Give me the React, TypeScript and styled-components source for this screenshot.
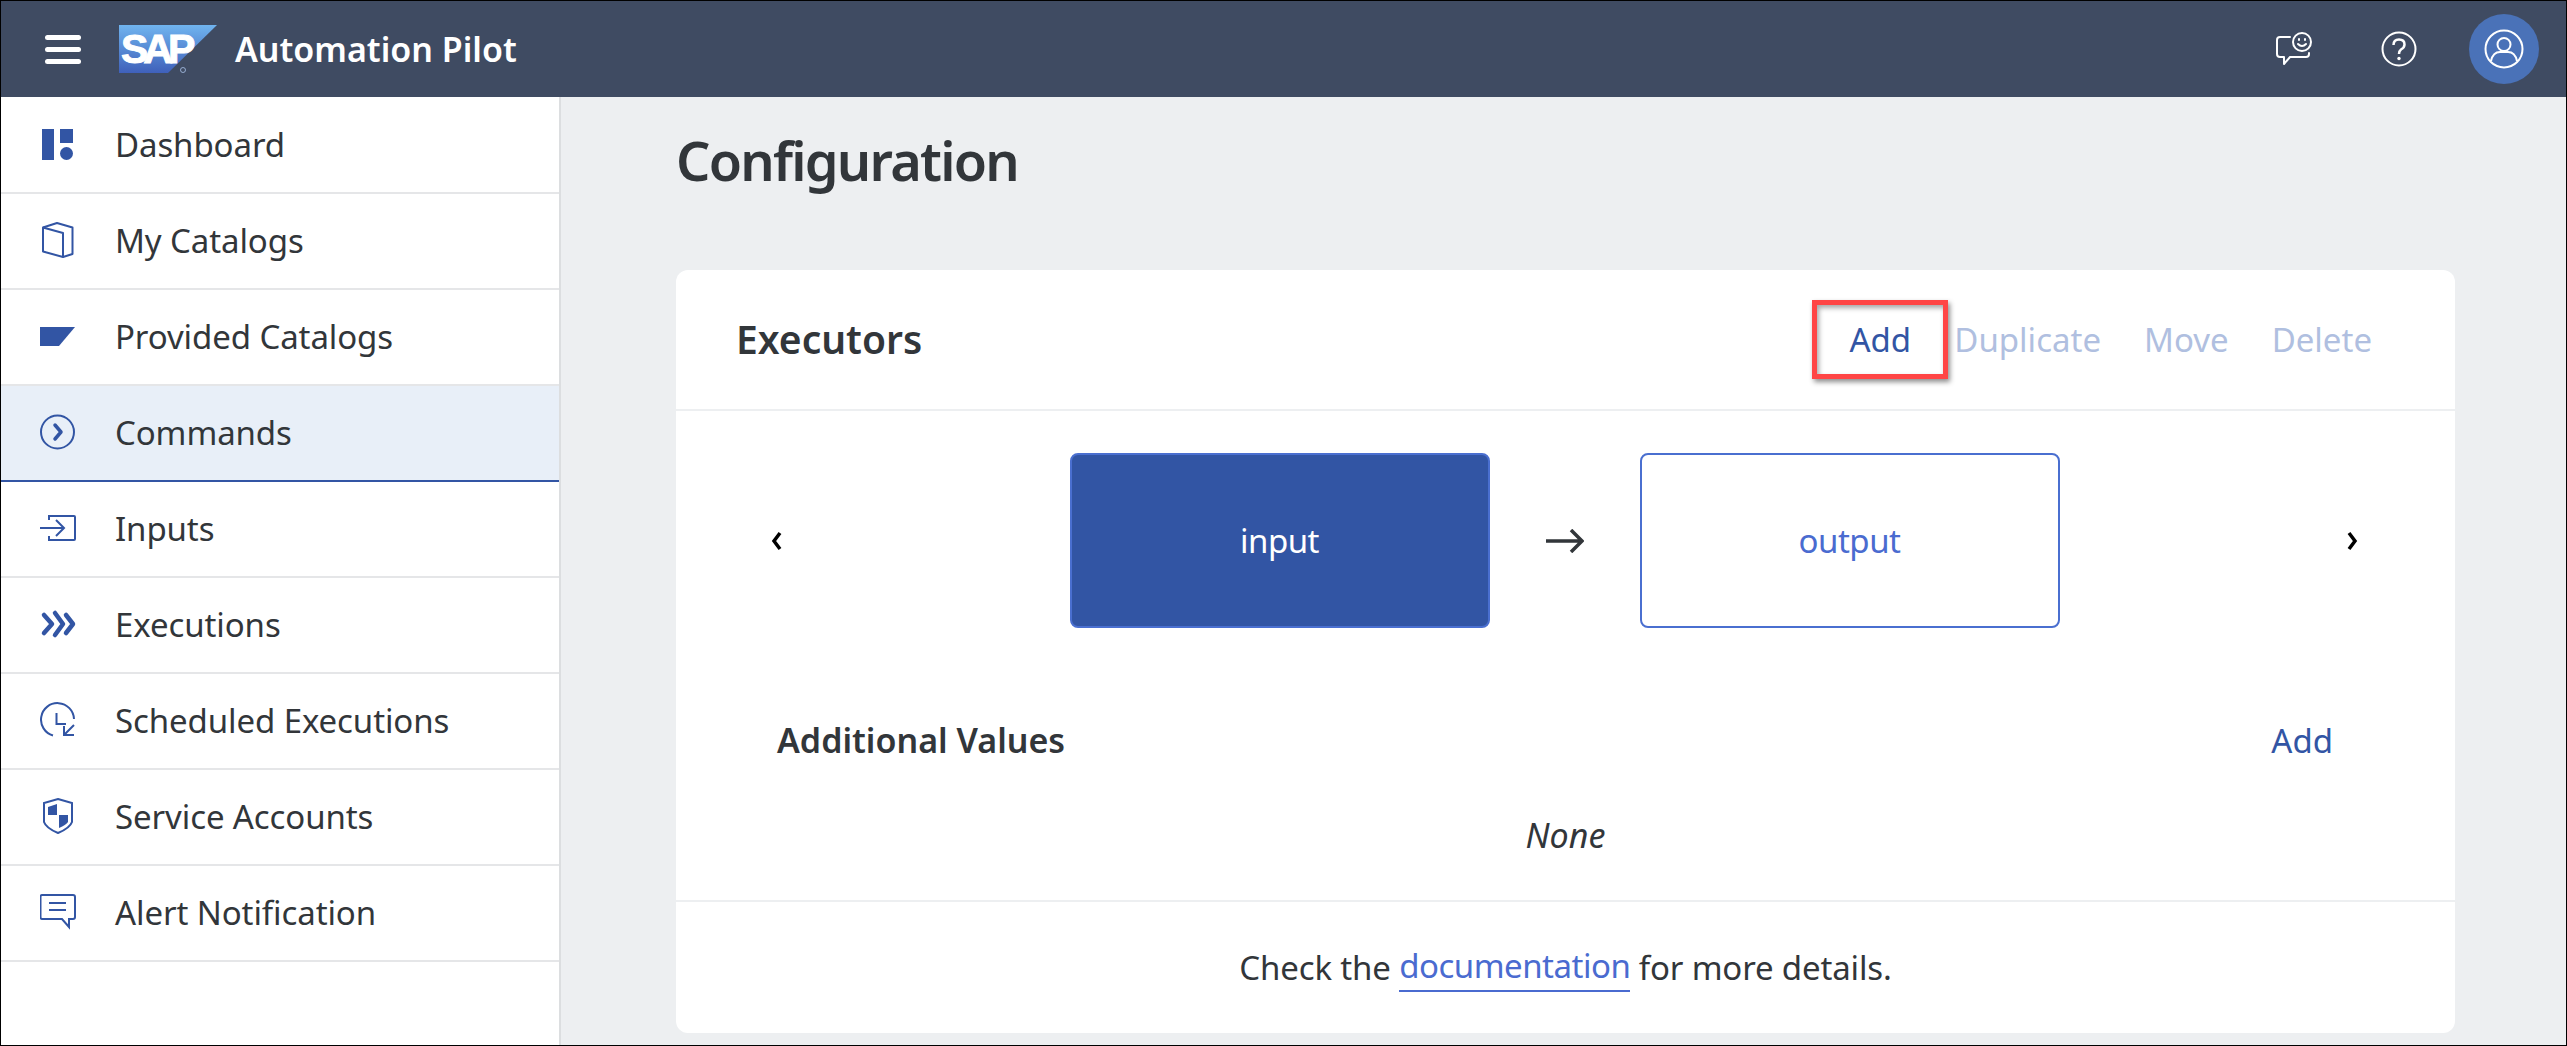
import React from "react";
import styled, { createGlobalStyle } from "styled-components";

const GlobalStyle = createGlobalStyle`
  html, body {
    margin: 0;
    height: 100%;
    overflow: hidden;
    background: #edeff1;
  }
  * {
    box-sizing: border-box;
  }
  #root {
    height: 100%;
  }
`;

const BLUE = "#3255a4";

// sidebar icons, all drawn on a 36x36 grid
const DashboardIcon = () => (
  <svg width="36" height="36" viewBox="0 0 36 36" fill={BLUE}>
    <rect x="2" y="3" width="12" height="31" />
    <rect x="20" y="3" width="13" height="14" />
    <circle cx="26.5" cy="27.5" r="6.5" />
  </svg>
);

const BookIcon = () => (
  <svg width="36" height="36" viewBox="0 0 36 36" fill="none" stroke={BLUE} strokeWidth="2" strokeLinejoin="round">
    <path d="M3 5.500 L23 11 V35 L3 29.500 Z" />
    <path d="M3 5.500 L17 1 L32.500 5.500 V32 L23 35" />
  </svg>
);

const TagIcon = () => (
  <svg width="36" height="36" viewBox="0 0 36 36" fill={BLUE}>
    <path d="M0 9 H35 L19 28 H0 Z" />
  </svg>
);

const CommandIcon = () => (
  <svg width="36" height="36" viewBox="0 0 36 36" fill="none" stroke={BLUE}>
    <circle cx="17.500" cy="18" r="16.500" strokeWidth="2" />
    <path d="M15 11 L21 18 L15 25" strokeWidth="3.500" strokeLinecap="round" strokeLinejoin="round" />
  </svg>
);

const InputIcon = () => (
  <svg width="36" height="36" viewBox="0 0 36 36" fill="none" stroke={BLUE} strokeWidth="2">
    <path d="M9 10 V6 H34 Q35 6 35 7 V29 Q35 30 34 30 H9 V26" />
    <path d="M0 18 H24 M16 10 L24 18 L16 26" />
  </svg>
);

const ExecutionIcon = () => (
  <svg width="36" height="36" viewBox="0 0 36 36" fill="none" stroke={BLUE} strokeWidth="4.500" strokeLinecap="round" strokeLinejoin="round">
    <path d="M4 9 L12 18 L4 27" />
    <path d="M15 7 L23 18 L15 29" />
    <path d="M26 9 L33 18 L26 27" />
  </svg>
);

const ScheduleIcon = () => (
  <svg width="36" height="36" viewBox="0 0 36 36" fill="none" stroke={BLUE} strokeWidth="2">
    <path d="M34 17 A16.500 16.500 0 1 0 13 33.500" />
    <path d="M16.500 11 V22 H26" />
    <path d="M34 23 L24 33 M24 24 V33 H34" />
  </svg>
);

const ShieldIcon = () => (
  <svg width="36" height="36" viewBox="0 0 36 36" fill="none" stroke={BLUE}>
    <path d="M18 1 L32 5 V24 Q30 30 18 35 Q6 30 4 24 V5 Z" strokeWidth="2" />
    <path d="M8 9 L17 6 V17 H8 Z M19 17 H28 V24 Q26 27 19 30 Z" fill={BLUE} stroke="none" />
  </svg>
);

const AlertIcon = () => (
  <svg width="36" height="36" viewBox="0 0 36 36" fill="none" stroke={BLUE} strokeWidth="2">
    <path d="M2 1 H33 Q35 1 35 3 V23 Q35 25 33 25 H29 V33 L22 25 H2 Q0.500 25 0.500 23 V3 Q0.500 1 2 1 Z" />
    <path d="M9 9 H26 M9 16 H26" />
  </svg>
);

const NAV_ITEMS = [
  { label: "Dashboard", icon: <DashboardIcon /> },
  { label: "My Catalogs", icon: <BookIcon /> },
  { label: "Provided Catalogs", icon: <TagIcon /> },
  { label: "Commands", icon: <CommandIcon />, active: true },
  { label: "Inputs", icon: <InputIcon /> },
  { label: "Executions", icon: <ExecutionIcon /> },
  { label: "Scheduled Executions", icon: <ScheduleIcon /> },
  { label: "Service Accounts", icon: <ShieldIcon /> },
  { label: "Alert Notification", icon: <AlertIcon /> },
];

const App: React.FC = () => {
  return (
    <Page>
      <GlobalStyle />
      <TopBar>
        <MenuButton>
          <span />
          <span />
          <span />
        </MenuButton>
        <svg width="98" height="48" viewBox="0 0 98 48">
          <defs>
            <linearGradient id="sapFill" x1="0" y1="0" x2="0" y2="1">
              <stop offset="0" stopColor="#70b4ef" />
              <stop offset="1" stopColor="#3f60ba" />
            </linearGradient>
          </defs>
          <path d="M0 0 H98 L49 48 H0 Z" fill="url(#sapFill)" />
          <text x="2" y="38" fontFamily="'Liberation Sans', sans-serif" fontWeight="700" fontSize="41" letterSpacing="-5" fill="#fff" stroke="#fff" strokeWidth="1">
            SAP
          </text>
          <circle cx="64" cy="45" r="2.500" fill="none" stroke="#a9c3ea" strokeWidth="0.800" />
        </svg>
        <ProductName>Automation Pilot</ProductName>
        <TopActions>
          <TopAction>
            <svg width="36" height="34" viewBox="0 0 36 34" fill="none" stroke="#fff" strokeWidth="2" strokeLinecap="round" strokeLinejoin="round">
              <path d="M14 5 H4 Q1 5 1 8 V22 Q1 25 4 25 H8 V32 L14 25 H30 Q33 25 33 22 V21" />
              <circle cx="26" cy="10" r="9" />
              <path d="M22 12 Q26 16 30 12" />
              <path d="M23 7 V8 M29 7 V8" />
            </svg>
          </TopAction>
          <TopAction>
            <svg width="36" height="36" viewBox="0 0 36 36" fill="none" stroke="#fff" strokeWidth="2">
              <circle cx="18" cy="18" r="16.500" />
              <path d="M12.500 14 Q12.500 8.500 18 8.500 Q23.500 8.500 23.500 13.500 Q23.500 16.500 20 18.500 Q18 20 18 23" strokeWidth="2.500" />
              <circle cx="18" cy="27.500" r="1.700" fill="#fff" stroke="none" />
            </svg>
          </TopAction>
          <Avatar>
            <svg width="40" height="40" viewBox="0 0 40 40" fill="none" stroke="#fff" strokeWidth="2">
              <circle cx="20" cy="20" r="18.500" />
              <circle cx="20" cy="15.500" r="6.500" />
              <path d="M7 32 Q9 23 16 23 H24 Q31 23 33 32" />
            </svg>
          </Avatar>
        </TopActions>
      </TopBar>
      <Body>
        <Sidebar>
          {NAV_ITEMS.map((item) => (
            <NavRow key={item.label} $active={item.active}>
              <NavIcon>{item.icon}</NavIcon>
              {item.label}
            </NavRow>
          ))}
        </Sidebar>
        <Main>
          <PageTitle>Configuration</PageTitle>
          <Card>
            <CardHeader>
              <CardTitle>Executors</CardTitle>
              <HeaderActions>
                <HighlightedAction>Add</HighlightedAction>
                <DisabledAction>Duplicate</DisabledAction>
                <DisabledAction>Move</DisabledAction>
                <DisabledAction>Delete</DisabledAction>
              </HeaderActions>
            </CardHeader>
            <Carousel>
              <Chevron>
                <svg width="14" height="22" viewBox="0 0 14 22" fill="none" stroke="#000" strokeWidth="3.500">
                  <path d="M11 3 L5 11 L11 19" />
                </svg>
              </Chevron>
              <Steps>
                <Step $selected>input</Step>
                <StepArrow>
                  <svg width="38" height="24" viewBox="0 0 38 24" fill="none" stroke="#32363a" strokeWidth="3.500">
                    <path d="M0 12 H36 M25 1 L36 12 L25 23" />
                  </svg>
                </StepArrow>
                <Step>output</Step>
              </Steps>
              <Chevron>
                <svg width="14" height="22" viewBox="0 0 14 22" fill="none" stroke="#000" strokeWidth="3.500">
                  <path d="M3 3 L9 11 L3 19" />
                </svg>
              </Chevron>
            </Carousel>
            <ValuesHeader>
              <ValuesTitle>Additional Values</ValuesTitle>
              <TextAction>Add</TextAction>
            </ValuesHeader>
            <EmptyNote>None</EmptyNote>
            <CardFooter>
              Check the&nbsp;<DocLink>documentation</DocLink>&nbsp;for more details.
            </CardFooter>
          </Card>
        </Main>
      </Body>
    </Page>
  );
};

export default App;

const Page = styled.div`
  height: 100vh;
  display: flex;
  flex-direction: column;
  border: 1px solid #000;
  font-family: "Noto Sans", "Open Sans", sans-serif;
  color: #32363a;
`;

const TopBar = styled.header`
  flex: none;
  height: 96px;
  display: flex;
  align-items: center;
  padding: 0 27px 0 44px;
  background: #3f4b62;
  color: #fff;
`;

const MenuButton = styled.div`
  width: 36px;
  margin-right: 38px;
  display: flex;
  flex-direction: column;
  gap: 7px;

  span {
    height: 5px;
    border-radius: 3px;
    background: #fff;
  }
`;

const ProductName = styled.div`
  margin-left: 18px;
  font-size: 34px;
  font-weight: 600;
`;

const TopActions = styled.div`
  margin-left: auto;
  display: flex;
  align-items: center;
  gap: 35px;
`;

const TopAction = styled.div`
  width: 70px;
  height: 70px;
  display: flex;
  align-items: center;
  justify-content: center;
`;

const Avatar = styled(TopAction)`
  border-radius: 50%;
  background: #4a72b8;
`;

const Body = styled.div`
  flex: 1;
  min-height: 0;
  display: flex;
`;

const Sidebar = styled.nav`
  flex: none;
  width: 560px;
  padding-top: 1px;
  background: #fff;
  border-right: 2px solid #dcdee0;
`;

const NavRow = styled.div<{ $active?: boolean }>`
  height: 96px;
  display: flex;
  align-items: center;
  padding: 0 0 2px 39px;
  font-size: 33px;
  letter-spacing: -0.1px;
  border-bottom: 2px solid ${(p) => (p.$active ? BLUE : "#e5e6e8")};
  background: ${(p) => (p.$active ? "#e8eff8" : "transparent")};
`;

const NavIcon = styled.span`
  width: 75px;
  height: 36px;
  flex: none;
  display: block;
`;

const Main = styled.main`
  flex: 1;
  min-width: 0;
  padding: 1px 111px 0 115px;
`;

const PageTitle = styled.h1`
  margin: 0;
  height: 172px;
  padding-top: 25px;
  font-size: 54px;
  line-height: 74px;
  font-weight: 600;
  letter-spacing: -1.75px;
`;

const Card = styled.section`
  height: 763px;
  display: flex;
  flex-direction: column;
  background: #fff;
  border-radius: 12px;
`;

const CardHeader = styled.div`
  flex: none;
  height: 141px;
  display: flex;
  align-items: center;
  justify-content: space-between;
  padding: 0 83px 0 60px;
  border-bottom: 2px solid #edeff1;
`;

const CardTitle = styled.h2`
  margin: 0 0 2px;
  font-size: 39px;
  font-weight: 600;
`;

const HeaderActions = styled.div`
  display: flex;
  align-items: center;
  gap: 43px;
  font-size: 33px;
`;

const HighlightedAction = styled.div`
  width: 136px;
  height: 79px;
  margin-right: -37px;
  display: flex;
  align-items: center;
  justify-content: center;
  color: ${BLUE};
  border: 5px solid #ff4545;
  box-shadow: 2px 3px 5px rgba(0, 0, 0, 0.45), inset 2px 3px 5px rgba(0, 0, 0, 0.35);
`;

const DisabledAction = styled.div`
  color: #b0bfe0;
`;

const Carousel = styled.div`
  flex: none;
  display: flex;
  align-items: center;
  padding: 42px 95px 0 93px;
`;

const Chevron = styled.div`
  width: 14px;
  flex: none;
  display: flex;
`;

const Steps = styled.div`
  flex: 1;
  display: flex;
  align-items: center;
  justify-content: center;
`;

const Step = styled.div<{ $selected?: boolean }>`
  width: 420px;
  height: 175px;
  display: flex;
  align-items: center;
  justify-content: center;
  font-size: 33px;
  letter-spacing: -0.5px;
  border: 2px solid #4a6fd0;
  border-radius: 8px;
  background: ${(p) => (p.$selected ? BLUE : "#fff")};
  color: ${(p) => (p.$selected ? "#fff" : "#4a6bd0")};
`;

const StepArrow = styled.div`
  width: 150px;
  display: flex;
  justify-content: center;
`;

const ValuesHeader = styled.div`
  flex: none;
  display: flex;
  align-items: center;
  justify-content: space-between;
  padding: 89px 122px 0 101px;
`;

const ValuesTitle = styled.h3`
  margin: 0;
  font-size: 34px;
  font-weight: 600;
`;

const TextAction = styled.div`
  font-size: 33px;
  color: ${BLUE};
`;

const EmptyNote = styled.div`
  flex: 1;
  display: flex;
  align-items: center;
  justify-content: center;
  padding-top: 6px;
  font-size: 34px;
  font-style: italic;
`;

const CardFooter = styled.div`
  flex: none;
  height: 133px;
  display: flex;
  align-items: center;
  justify-content: center;
  font-size: 33px;
  letter-spacing: -0.15px;
  border-top: 2px solid #edeff1;
`;

const DocLink = styled.span`
  padding-bottom: 2px;
  letter-spacing: -0.5px;
  color: #4a6bd0;
  border-bottom: 2px solid #4a6bd0;
`;
